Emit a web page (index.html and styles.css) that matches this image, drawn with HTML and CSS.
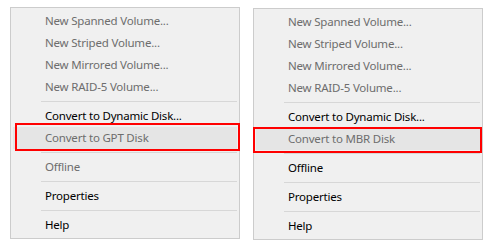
FILE: index.html
```html
<!DOCTYPE html>
<html lang="en">
<head>
  <meta charset="UTF-8"/>
  <title>Disk context menus</title>
  <link rel="stylesheet" href="styles.css">
</head>
<body>
<div class="menus">
  <!-- MBR disk menu -->
  <div class="ctx-menu">
    <div class="menu-item disabled">New Spanned Volume...</div>
    <div class="menu-item disabled">New Striped Volume...</div>
    <div class="menu-item disabled">New Mirrored Volume...</div>
    <div class="menu-item disabled">New RAID-5 Volume...</div>
    <div class="menu-sep"></div>
    <div class="menu-item">Convert to Dynamic Disk...</div>
    <div class="menu-item disabled hot mark-left">Convert to GPT Disk</div>
    <div class="menu-sep"></div>
    <div class="menu-item disabled">Offline</div>
    <div class="menu-sep"></div>
    <div class="menu-item">Properties</div>
    <div class="menu-sep"></div>
    <div class="menu-item">Help</div>
  </div>

  <!-- GPT disk menu -->
  <div class="ctx-menu second">
    <div class="menu-item disabled">New Spanned Volume...</div>
    <div class="menu-item disabled">New Striped Volume...</div>
    <div class="menu-item disabled">New Mirrored Volume...</div>
    <div class="menu-item disabled">New RAID-5 Volume...</div>
    <div class="menu-sep"></div>
    <div class="menu-item">Convert to Dynamic Disk...</div>
    <div class="menu-item disabled hot mark-right">Convert to MBR Disk</div>
    <div class="menu-sep"></div>
    <div class="menu-item">Offline</div>
    <div class="menu-sep"></div>
    <div class="menu-item">Properties</div>
    <div class="menu-sep"></div>
    <div class="menu-item">Help</div>
  </div>
</div>
</body>
</html>
```

FILE: styles.css
```css
body {
  margin: 0;
  background-color: #fff;
  font-family: "Noto Sans", Arial, sans-serif;
  font-size: 11.5px;
  letter-spacing: -0.2px;
}
.menus {
  display: flex;
  align-items: flex-start;
  gap: 13px;
  padding: 7px 0 0 10px;
}
.ctx-menu {
  background-color: #f0f0f0;
  border: 1px solid #cccccc;
  padding: 2px;
  box-sizing: content-box;
  width: 224px;
}
.ctx-menu.second {
  margin-top: 1px;
}
.menu-item {
  position: relative;
  height: 22px;
  line-height: 22px;
  padding-left: 32px;
  color: #000;
  white-space: nowrap;
}
.menu-item.disabled {
  color: #6d6d6d;
}
.menu-item.hot {
  background-color: #e5e5e5;
}
/* red annotation box drawn over the highlighted item */
.menu-item.mark-left::after,
.menu-item.mark-right::after {
  content: "";
  position: absolute;
  border: 2px solid #ff0000;
  pointer-events: none;
}
.menu-item.mark-left::after {
  left: 2px;
  right: -3px;
  top: -4px;
  bottom: -2px;
}
.menu-item.mark-right::after {
  left: -3px;
  right: -2px;
  top: -1px;
  bottom: -3px;
}
.menu-sep {
  height: 1px;
  margin: 3px 0 3px 28px;
  background-color: #d7d7d7;
}
```
